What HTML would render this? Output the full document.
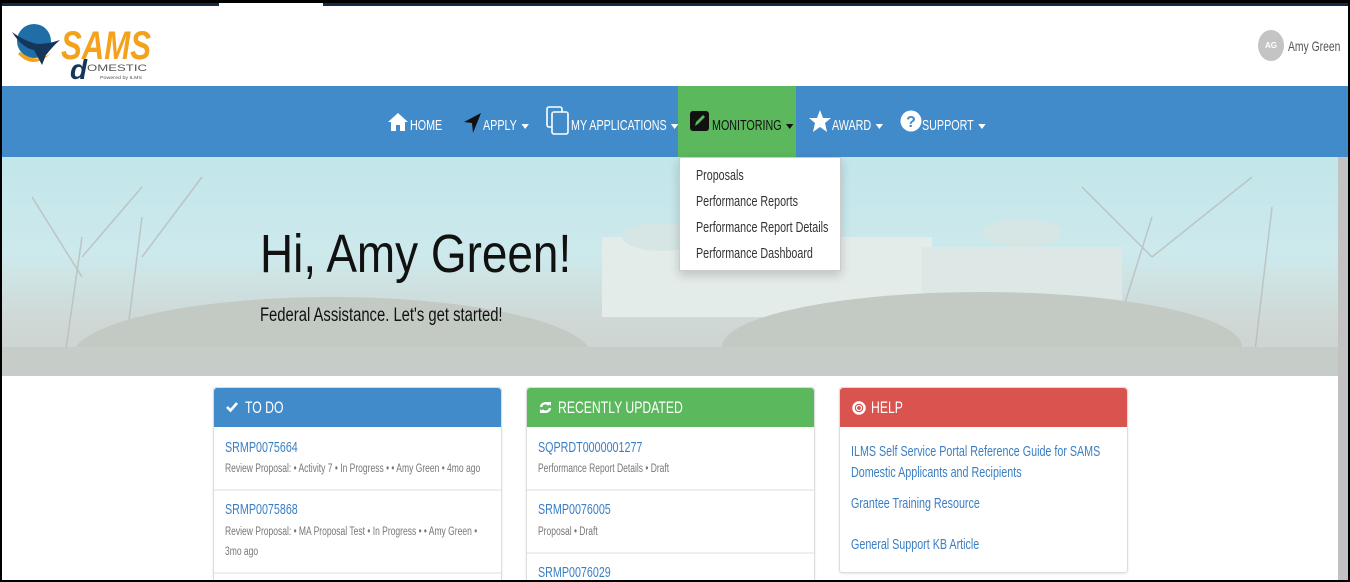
<!DOCTYPE html>
<html><head><meta charset="utf-8"><style>
*{margin:0;padding:0;box-sizing:border-box}
body{width:1350px;height:582px;overflow:hidden;background:#000;font-family:"Liberation Sans",sans-serif;position:relative}
#page{position:absolute;left:2px;top:3px;width:1346px;height:577px;background:#fff;overflow:hidden}
.t{position:absolute;white-space:nowrap;transform:scaleX(.74);transform-origin:0 50%;line-height:1}
.topbar{position:absolute;left:0;top:0;height:3px;background:#14284a}
.nav{position:absolute;left:0;top:83px;width:1346px;height:71px;background:#428bca}
.nav .t{color:#fff;font-size:14.5px;top:33px}
.nav svg{position:absolute}
.car{display:inline-block;width:0;height:0;border-left:5px solid transparent;border-right:5px solid transparent;border-top:5px solid currentColor;margin-left:6px;vertical-align:middle}
.hero{position:absolute;left:0;top:154px;width:1336px;height:219px;background:linear-gradient(180deg,#c2e6ea 0%,#cde9ec 45%,#cfd8d5 75%,#ccd2cf 100%);overflow:hidden}
.drop{position:absolute;left:677px;top:154px;width:162px;height:114px;background:#fff;border:1px solid #ccc;box-shadow:0 4px 10px rgba(0,0,0,.18);color:#333}
.drop .t{left:16px;font-size:14.5px}
.panel{position:absolute;top:384px;width:289px;background:#fff;border:1px solid #ddd;border-radius:3px;box-shadow:0 1px 2px rgba(0,0,0,.1);height:200px;overflow:hidden}
.ph{position:absolute;left:0;top:0;width:100%;height:39px;border-radius:3px 3px 0 0}
.ph svg{position:absolute;left:12px;top:13px}
.ph .t{color:#fff;font-size:16.5px;left:31px;top:12px}
.sep{position:absolute;left:0;width:100%;height:2px;background:#eee}
.lk{color:#3a7fc4;font-size:14.5px;left:11px}
.sub{color:#777;font-size:11.5px;left:11px}
</style></head><body>
<div id="page">
<div class="topbar" style="width:217px"></div>
<div class="topbar" style="left:321px;width:1025px"></div>
<svg style="position:absolute;left:8px;top:12px" width="150" height="68" viewBox="0 0 150 68">
<circle cx="24" cy="26" r="17" fill="#1f6ea8"/>
<path d="M8 39 Q24 56 42 37 Q28 50 10 37Z" fill="#f4a21c"/>
<path d="M2 17 Q12 33 24 35 L32 50 L36 40 Q44 30 50 25 Q38 29 28 29 Q16 27 2 17Z" fill="#15365a"/>
<text x="51" y="44" textLength="90" lengthAdjust="spacingAndGlyphs" font-family="Liberation Sans" font-weight="bold" font-style="italic" font-size="40" fill="#f4a21c">SAMS</text>
<text x="60" y="64" font-family="Liberation Sans" font-style="italic" font-weight="bold" font-size="28" fill="#15365a">d</text>
<text x="77" y="56" textLength="60" lengthAdjust="spacingAndGlyphs" font-family="Liberation Sans" font-size="9" fill="#555">OMESTIC</text>
<text x="90" y="64" textLength="42" lengthAdjust="spacingAndGlyphs" font-family="Liberation Sans" font-size="4.5" fill="#555">Powered by ILMS</text>
</svg>
<div style="position:absolute;left:1256px;top:27px;width:26px;height:31px;border-radius:50%;background:#c4c4c4;color:#fff;font-size:8px;font-weight:bold;display:flex;align-items:center;justify-content:center">AG</div>
<div class="t" style="left:1286px;top:36px;font-size:14px;color:#555">Amy Green</div>
<div class="nav">
<svg style="left:385px;top:25px" width="22" height="22" viewBox="0 0 22 20"><path d="M11 1 L1 10 L4 10 L4 19 L9 19 L9 13 L13 13 L13 19 L18 19 L18 10 L21 10 Z" fill="#fff"/></svg>
<div class="t" style="left:408px">HOME</div>
<svg style="left:461px;top:25px" width="20" height="24" viewBox="0 0 20 22"><path d="M18 1 L1 10 L9 11 L10 21 Z" fill="#111"/></svg>
<div class="t" style="left:481px">APPLY<span class="car"></span></div>
<svg style="left:544px;top:20px" width="24" height="30" viewBox="0 0 24 30"><rect x="1" y="1" width="15" height="20" rx="2" fill="none" stroke="#fff" stroke-width="1.6"/><rect x="6" y="6" width="16" height="22" rx="2" fill="#428bca" stroke="#fff" stroke-width="1.6"/></svg>
<div class="t" style="left:569px">MY APPLICATIONS<span class="car"></span></div>
<div style="position:absolute;left:676px;top:0;width:118px;height:71px;background:#5cb85c"></div>
<svg style="left:688px;top:24px" width="20" height="22" viewBox="0 0 20 22"><rect x="0" y="1" width="19" height="20" rx="3" fill="#111"/><path d="M5 16 L6 12 L13 5 L15 7 L8 14Z" fill="#5cb85c"/></svg>
<div class="t" style="left:710px;color:#111">MONITORING<span class="car"></span></div>
<svg style="left:806px;top:22px" width="24" height="26" viewBox="0 0 24 24"><path d="M12 1 L15 9 L23 9 L17 14 L19 23 L12 18 L5 23 L7 14 L1 9 L9 9Z" fill="#fff"/></svg>
<div class="t" style="left:830px">AWARD<span class="car"></span></div>
<svg style="left:898px;top:23px" width="22" height="24" viewBox="0 0 22 22"><circle cx="11" cy="11" r="10.5" fill="#fff"/><text x="11" y="17" text-anchor="middle" font-family="Liberation Sans" font-weight="bold" font-size="16" fill="#428bca">?</text></svg>
<div class="t" style="left:920px">SUPPORT<span class="car"></span></div>
</div>
<div class="hero">
<svg width="1336" height="219" style="position:absolute;left:0;top:0">
<g fill="none" stroke="#b8bcbc" stroke-width="1.5" opacity=".8">
<path d="M60 219 L80 80 M80 120 L30 40 M80 100 L140 30 M120 219 L140 60 M140 100 L200 20"/>
<path d="M1100 219 L1150 60 M1150 100 L1250 20 M1150 100 L1080 30 M1250 219 L1270 50"/>
</g>
<rect x="600" y="80" width="330" height="80" fill="#e4ecea"/>
<ellipse cx="660" cy="80" rx="40" ry="14" fill="#d6e6e4"/>
<ellipse cx="1020" cy="76" rx="40" ry="14" fill="#d6e6e4"/>
<rect x="920" y="90" width="200" height="70" fill="#dde8e6"/>
<ellipse cx="330" cy="200" rx="260" ry="60" fill="#c3cac4"/>
<ellipse cx="980" cy="190" rx="260" ry="55" fill="#c3cac4"/>
<rect x="0" y="190" width="1336" height="29" fill="#c6ccc8"/>
</svg>
<div class="t" style="left:258px;top:70px;font-size:54px;color:#111;transform:scaleX(.85)">Hi, Amy Green!</div>
<div class="t" style="left:258px;top:149px;font-size:19px;color:#111;transform:scaleX(.78)">Federal Assistance. Let's get started!</div>
</div>
<div style="position:absolute;left:1336px;top:154px;width:10px;height:423px;background:#c2c2c2"></div>
<div class="drop">
<div class="t" style="top:11px">Proposals</div>
<div class="t" style="top:37px">Performance Reports</div>
<div class="t" style="top:63px">Performance Report Details</div>
<div class="t" style="top:89px">Performance Dashboard</div>
</div>
<div class="panel" style="left:211px">
<div class="ph" style="background:#428bca"><svg width="12" height="12" viewBox="0 0 12 12"><path d="M1 6 L4.5 9.5 L11 2" stroke="#fff" stroke-width="2.6" fill="none"/></svg><div class="t">TO DO</div></div>
<div class="t lk" style="top:53px">SRMP0075664</div>
<div class="t sub" style="top:76px">Review Proposal: • Activity 7 • In Progress • • Amy Green • 4mo ago</div>
<div class="sep" style="top:101px"></div>
<div class="t lk" style="top:115px">SRMP0075868</div>
<div class="t sub" style="top:139px">Review Proposal: • MA Proposal Test • In Progress • • Amy Green •</div>
<div class="t sub" style="top:159px">3mo ago</div>
<div class="sep" style="top:184px"></div>
</div>
<div class="panel" style="left:524px">
<div class="ph" style="background:#5cb85c"><svg width="13" height="13" viewBox="0 0 13 13"><path d="M2 6 A4.5 4.5 0 0 1 10 4 M11 7 A4.5 4.5 0 0 1 3 9" stroke="#fff" stroke-width="2.4" fill="none"/><path d="M8 1 L12 1 L12 5Z M5 12 L1 12 L1 8Z" fill="#fff"/></svg><div class="t">RECENTLY UPDATED</div></div>
<div class="t lk" style="top:53px">SQPRDT0000001277</div>
<div class="t sub" style="top:76px">Performance Report Details • Draft</div>
<div class="sep" style="top:101px"></div>
<div class="t lk" style="top:115px">SRMP0076005</div>
<div class="t sub" style="top:139px">Proposal • Draft</div>
<div class="sep" style="top:164px"></div>
<div class="t lk" style="top:178px">SRMP0076029</div>
</div>
<div class="panel" style="left:837px;height:186px">
<div class="ph" style="background:#d9534f"><svg width="14" height="14" viewBox="0 0 14 14"><circle cx="7" cy="7" r="5.5" fill="none" stroke="#fff" stroke-width="2.5"/><circle cx="7" cy="7" r="2.5" fill="none" stroke="#fff" stroke-width="1.2"/></svg><div class="t">HELP</div></div>
<div class="t lk" style="top:57px">ILMS Self Service Portal Reference Guide for SAMS</div>
<div class="t lk" style="top:78px">Domestic Applicants and Recipients</div>
<div class="t lk" style="top:109px">Grantee Training Resource</div>
<div class="t lk" style="top:150px">General Support KB Article</div>
</div>
</div>
</body></html>
